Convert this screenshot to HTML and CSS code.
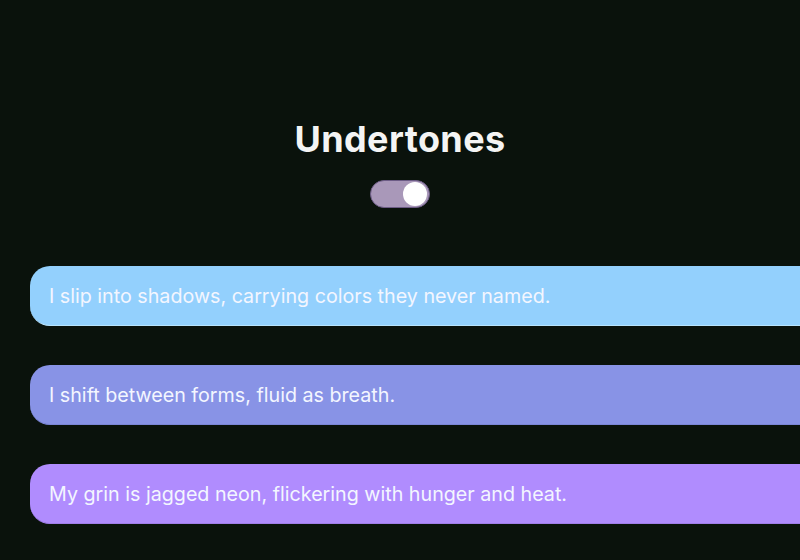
FILE: index.html
```html
<!DOCTYPE html>
<html lang="en">
<head>
<meta charset="utf-8">
<title>Undertones</title>
<link rel="stylesheet" href="styles.css">
</head>
<body>
<main class="page">
  <header class="head">
    <h1 class="title">Undertones</h1>
    <div class="toggle"><span class="knob"></span></div>
  </header>
  <section class="list">
    <div class="card card-sky">I slip into shadows, carrying colors they never named.</div>
    <div class="card card-periwinkle">I shift between forms, fluid as breath.</div>
    <div class="card card-violet">My grin is jagged neon, flickering with hunger and heat.</div>
  </section>
</main>
</body>
</html>
```
FILE: styles.css
```css
html, body {
  margin: 0;
  padding: 0;
  background: #0a120c;
  overflow: hidden;
  width: 800px;
  height: 560px;
}
.page {
  font-family: Inter, "Liberation Sans", sans-serif;
  padding-top: 117px;
  overflow: hidden;
}
.head {
  display: flex;
  flex-direction: column;
  align-items: center;
}
.title {
  margin: 0;
  font-size: 36px;
  font-weight: 700;
  line-height: 44px;
  color: #f4f4f4;
  letter-spacing: 0.4px;
}
.toggle {
  margin-top: 19px;
  width: 60px;
  height: 28px;
  border-radius: 14px;
  background: #a998b9;
  box-sizing: border-box;
  border: 1px solid #6d5c86;
  display: flex;
  align-items: center;
  justify-content: flex-end;
  padding-right: 2px;
}
.knob {
  width: 24px;
  height: 24px;
  border-radius: 50%;
  background: #ffffff;
}
.list {
  margin-top: 58px;
  padding-left: 30px;
  display: flex;
  flex-direction: column;
  gap: 39px;
}
.card {
  margin-right: -40px;
  height: 60px;
  box-sizing: border-box;
  border-radius: 20px;
  padding-left: 19px;
  display: flex;
  align-items: center;
  font-size: 19.7px;
  color: #f3f6ff;
}
.card-sky {
  background: #93d0fd;
  border-bottom: 1px solid #b8e4ff;
}
.card-periwinkle {
  background: #8893e6;
  border-bottom: 1px solid #7b86d6;
}
.card-violet {
  background: #b08cfe;
  border-bottom: 1px solid #a07ee8;
}
```
